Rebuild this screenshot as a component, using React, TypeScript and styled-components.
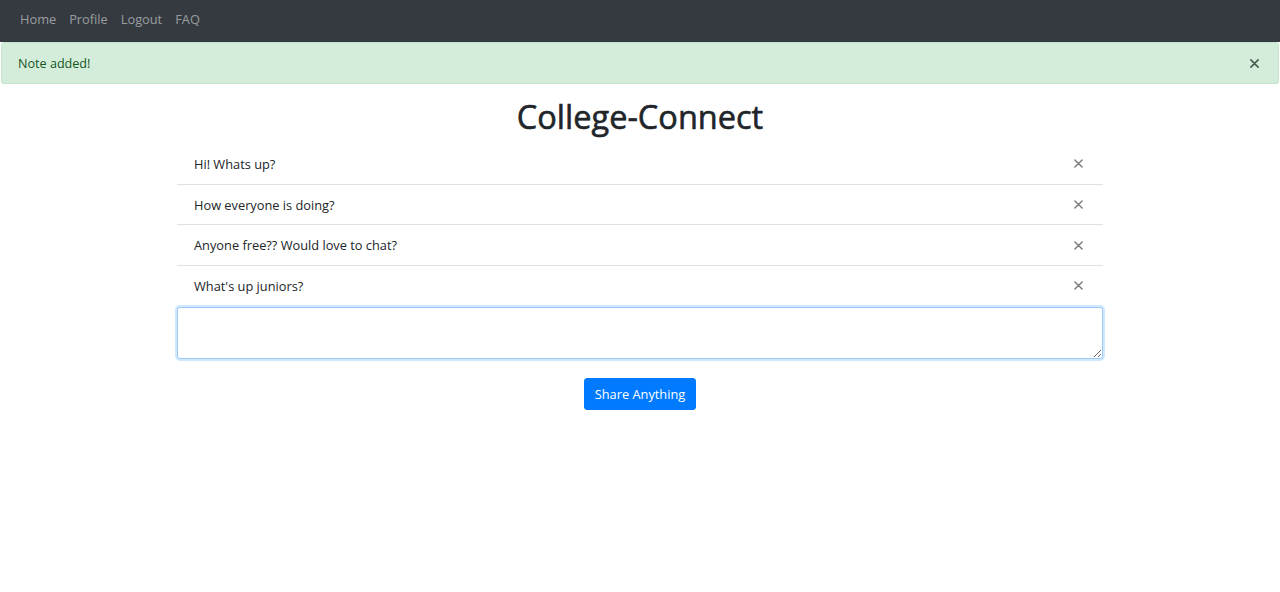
import React from "react";
import styled, { createGlobalStyle } from "styled-components";

const Global = createGlobalStyle`
  html, body { margin: 0; padding: 0; background: #fff; }
  body { font-family: "Open Sans", "Noto Sans", sans-serif; color: #212529; }
  * { box-sizing: border-box; }
`;

const Navbar = styled.nav`
  height: 42px;
  background: #343a40;
  display: flex;
  align-items: center;
  padding: 0 0 4px 13.5px;
`;

const NavLink = styled.a`
  color: rgba(255, 255, 255, 0.5);
  font-size: 12.8px;
  padding: 0 6.5px;
  text-decoration: none;
`;

const Alert = styled.div`
  height: 42px;
  margin: 0 1px;
  background: #d4edda;
  border: 1px solid #c3e6cb;
  border-radius: 3px;
  color: #155724;
  font-size: 12.6px;
  display: flex;
  align-items: center;
  justify-content: space-between;
  padding: 0 19px 0 16px;
`;

const CloseX = styled.span<{ $color: string }>`
  display: inline-flex;
  color: ${(p) => p.$color};
  svg { display: block; }
`;

const Container = styled.main`
  width: 926px;
  margin: 0 auto;
  display: flex;
  flex-direction: column;
`;

const Title = styled.h1`
  margin: 13px 0 6px;
  text-align: center;
  font-size: 32.5px;
  font-weight: 400;
  line-height: 40px;
  color: #212529;
  -webkit-text-stroke: 0.6px #212529;
`;

const List = styled.ul`
  list-style: none;
  margin: 0;
  padding: 0;
`;

const Item = styled.li`
  height: 40.5px;
  display: flex;
  align-items: center;
  justify-content: space-between;
  padding: 1px 20px 0 17px;
  font-size: 12.8px;
  color: #212529;
  & + & { border-top: 1px solid #dee2e6; }
`;

const TextArea = styled.textarea`
  display: block;
  width: 100%;
  height: 52px;
  margin-top: 2px;
  border: 1px solid #9ccaf5;
  border-radius: 3px;
  box-shadow: 0 0 0 2px rgba(0, 123, 255, 0.18);
  outline: none;
  resize: vertical;
  font: inherit;
  font-size: 14px;
  padding: 6px 10px;
  caret-color: #999;
`;

const ButtonRow = styled.div`
  display: flex;
  justify-content: center;
  margin-top: 19px;
`;

const Button = styled.button`
  height: 32px;
  padding: 0 10px;
  background: #007bff;
  color: #fff;
  border: 1px solid #007bff;
  border-radius: 3px;
  font-family: inherit;
  font-size: 12.8px;
`;

const X = ({ size = 9, w = 1.6 }: { size?: number; w?: number }) => (
  <svg width={size} height={size} viewBox="0 0 10 10">
    <path d="M1 1 L9 9 M9 1 L1 9" stroke="currentColor" strokeWidth={w} strokeLinecap="round" />
  </svg>
);

const notes = [
  "Hi! Whats up?",
  "How everyone is doing?",
  "Anyone free?? Would love to chat?",
  "What's up juniors?",
];

export default function App() {
  return (
    <>
      <Global />
      <Navbar>
        <NavLink>Home</NavLink>
        <NavLink>Profile</NavLink>
        <NavLink>Logout</NavLink>
        <NavLink>FAQ</NavLink>
      </Navbar>
      <Alert>
        <span>Note added!</span>
        <CloseX $color="#4a5a4e"><X size={9} w={1.8} /></CloseX>
      </Alert>
      <Container>
        <Title>College-Connect</Title>
        <List>
          {notes.map((n) => (
            <Item key={n}>
              <span>{n}</span>
              <CloseX $color="#7a7a7a"><X /></CloseX>
            </Item>
          ))}
        </List>
        <TextArea autoFocus />
        <ButtonRow>
          <Button>Share Anything</Button>
        </ButtonRow>
      </Container>
    </>
  );
}
